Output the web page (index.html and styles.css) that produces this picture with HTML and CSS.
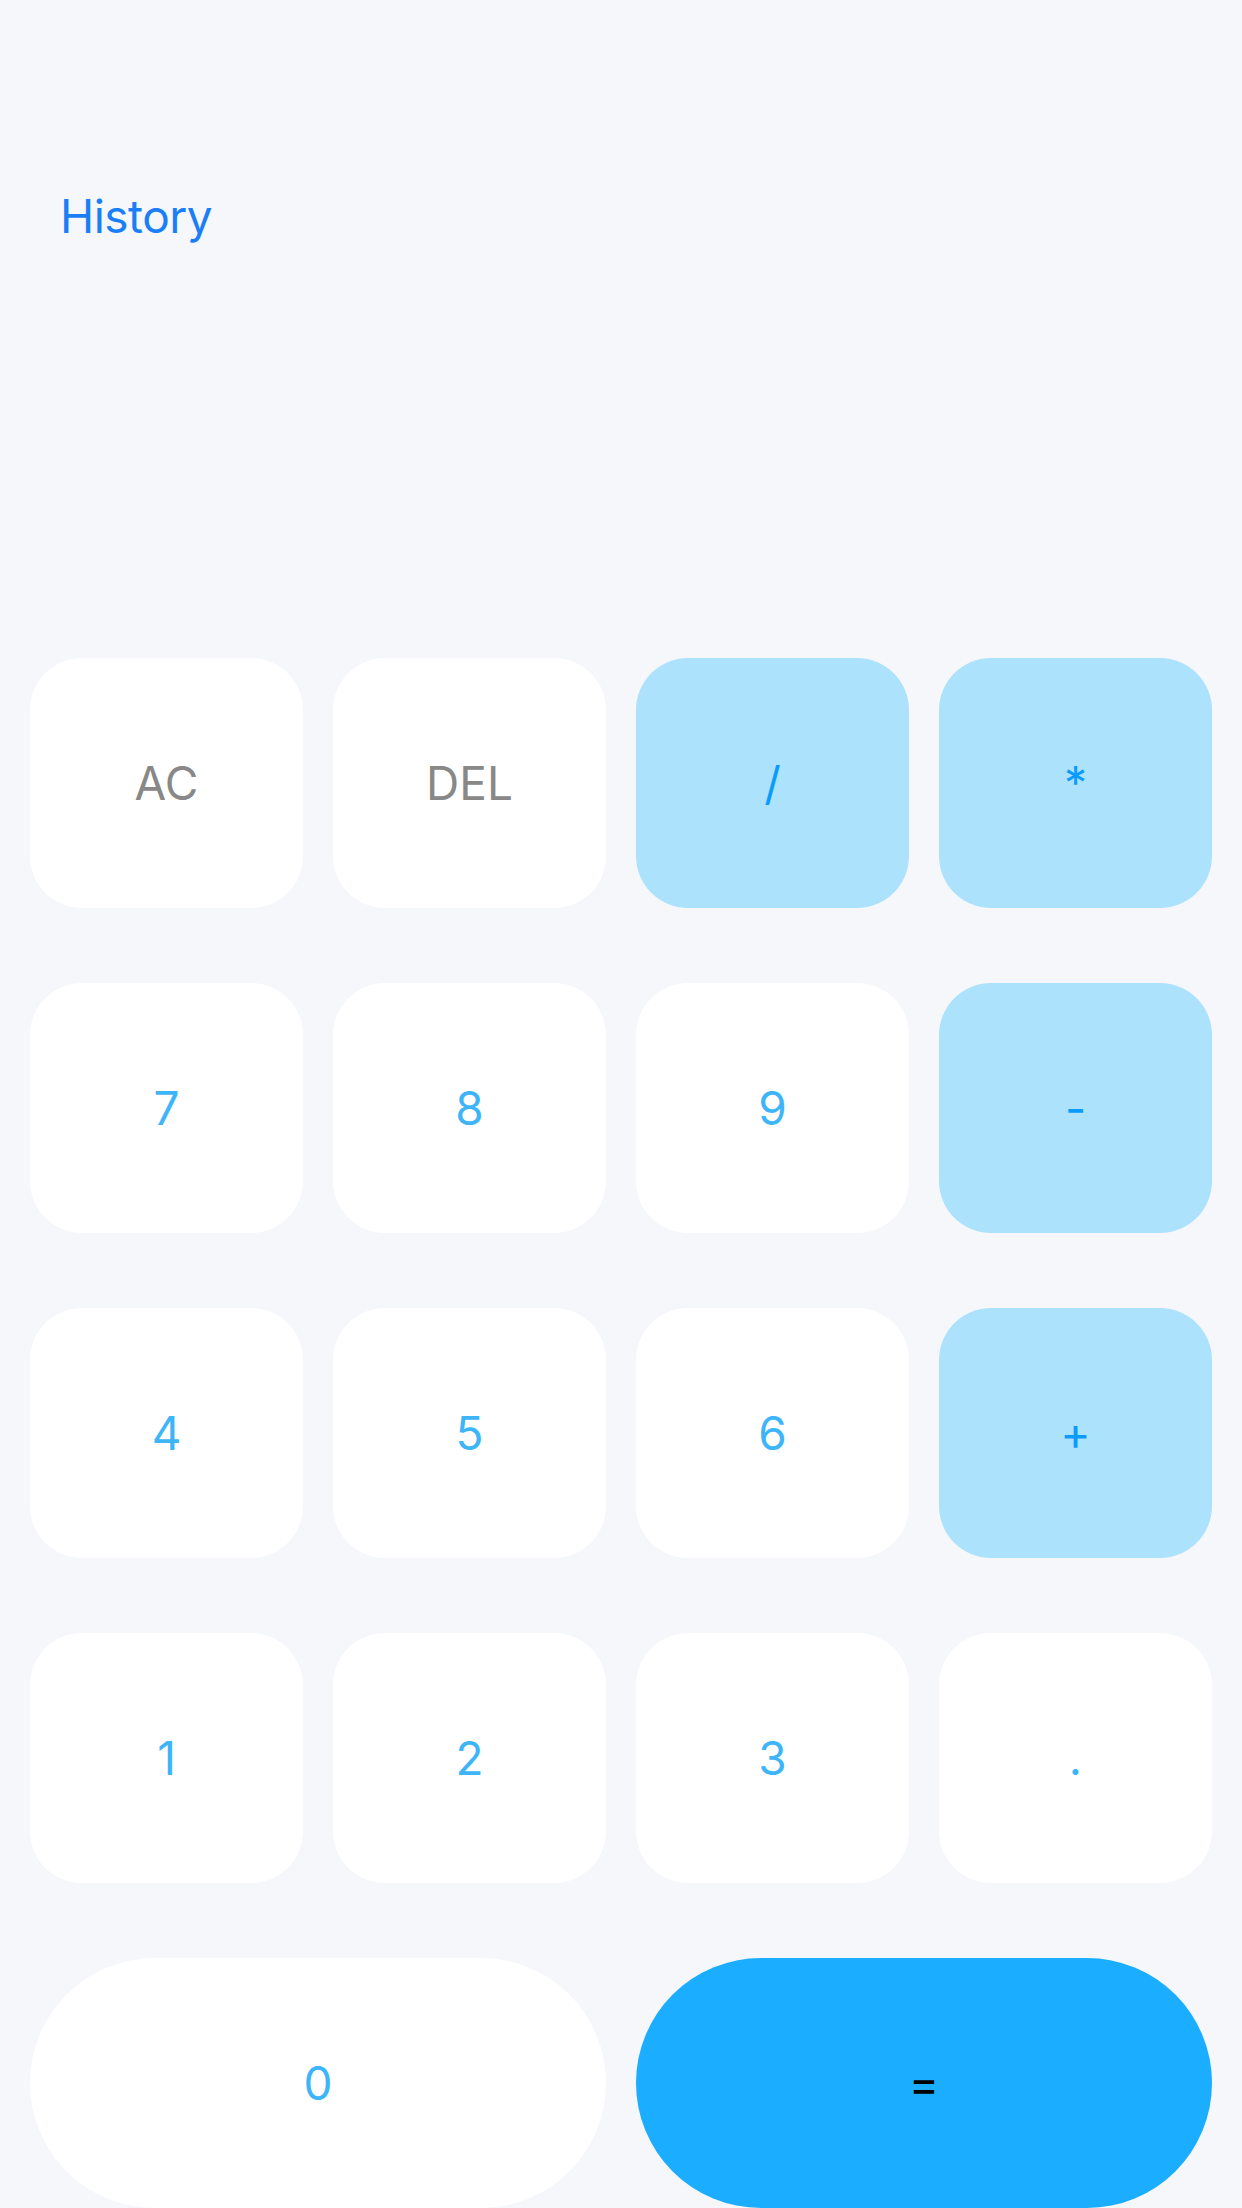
FILE: index.html
```html
<!DOCTYPE html>
<html lang="en">
<head>
<meta charset="utf-8">
<title>Calculator</title>
<link rel="stylesheet" href="styles.css">
</head>
<body>
<div class="app">
  <header class="top">
    <a class="history">History</a>
  </header>
  <main class="keypad">
    <button class="key key-fn">AC</button>
    <button class="key key-fn">DEL</button>
    <button class="key key-op">/</button>
    <button class="key key-op">*</button>
    <button class="key">7</button>
    <button class="key">8</button>
    <button class="key">9</button>
    <button class="key key-op">-</button>
    <button class="key">4</button>
    <button class="key">5</button>
    <button class="key">6</button>
    <button class="key key-op">+</button>
    <button class="key">1</button>
    <button class="key">2</button>
    <button class="key">3</button>
    <button class="key">.</button>
    <button class="key key-wide key-pill">0</button>
    <button class="key key-wide key-pill key-eq">=</button>
  </main>
</div>
</body>
</html>
```
FILE: styles.css
```css
html, body {
  margin: 0;
  padding: 0;
}
body {
  background: #f6f7fb;
  font-family: Inter, "Open Sans", "Liberation Sans", sans-serif;
  width: 1242px;
  height: 2208px;
  overflow: hidden;
}
.app {
  display: flex;
  flex-direction: column;
}
.top {
  padding: 193px 0 0 60px;
  height: 658px;
  box-sizing: border-box;
}
.history {
  display: block;
  font-size: 46px;
  line-height: 46px;
  letter-spacing: -0.5px;
  color: #1a7ff7;
}
.keypad {
  display: grid;
  grid-template-columns: repeat(4, 273px);
  grid-auto-rows: 250px;
  column-gap: 30px;
  row-gap: 75px;
  padding-left: 30px;
}
.key {
  border: none;
  margin: 0;
  padding: 0;
  background: #ffffff;
  border-radius: 52px;
  font-family: Inter, "Open Sans", "Liberation Sans", sans-serif;
  font-size: 46px;
  font-weight: 400;
  color: #3db5f8;
  display: flex;
  align-items: center;
  justify-content: center;
}
.key-fn {
  color: #888888;
}
.key-op {
  background: #ade2fd;
  color: #0a9bff;
}
.key-wide {
  grid-column: span 2;
}
.key-pill {
  border-radius: 125px;
}
.key-eq {
  background: #1badff;
  color: #000000;
}
```
